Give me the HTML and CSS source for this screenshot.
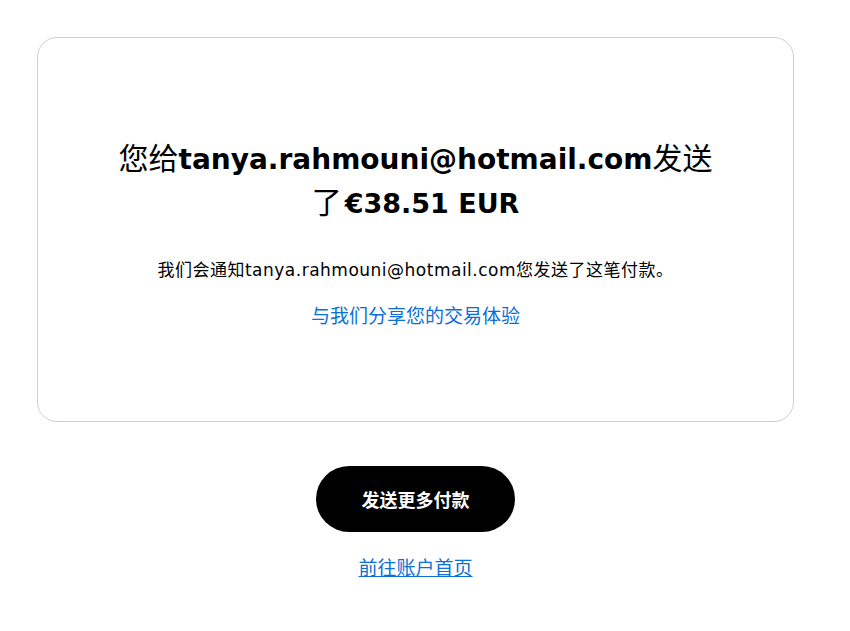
FILE: index.html
```html
<!DOCTYPE html>
<html lang="zh-CN">
<head>
    <meta charset="UTF-8">
    <meta name="viewport" content="width=device-width, initial-scale=1.0">
    <title>付款已发送</title>
    <link rel="stylesheet" href="styles.css">
</head>
<body>
    <div class="page">
        <!-- 付款确认 -->
        <div class="card">
            <h1 class="title"><span>您给</span><b>tanya.rahmouni@hotmail.com</b><span>发送</span><span>了</span><b class="amount">€38.51 EUR</b></h1>
            <p class="note">我们会通知tanya.rahmouni@hotmail.com您发送了这笔付款。</p>
            <a class="feedback" href="#">与我们分享您的交易体验</a>
        </div>

        <div class="actions">
            <a class="btn-primary" href="#">发送更多付款</a>
            <a class="home-link" href="#">前往账户首页</a>
        </div>
    </div>
</body>
</html>
```

FILE: styles.css
```css
body {
    margin: 0;
    padding: 0;
    background-color: #fff;
    color: #000;
    font-family: "DejaVu Sans", "Noto Sans CJK SC", sans-serif;
}
.page {
    padding: 37px 56px 0 37px;
}
.card {
    border: 1px solid #cfcfcf;
    border-radius: 20px;
    padding: 99px 20px 93px;
    display: flex;
    flex-direction: column;
    align-items: center;
    text-align: center;
}
.title {
    margin: 0;
    max-width: 606px;
    font-size: 30px;
    line-height: 44px;
    font-weight: 400;
}
.title b {
    font-size: 28px;
    line-height: 30px;
    font-weight: 700;
}
.title .amount {
    margin-left: 3px;
    font-size: 27px;
}
.note {
    margin: 33px 0 0;
    font-size: 17px;
    line-height: 24px;
    letter-spacing: 0.5px;
}
.feedback {
    margin-top: 22px;
    font-size: 19px;
    line-height: 24px;
    color: #0b6fd6;
    text-decoration: none;
}
.actions {
    display: flex;
    flex-direction: column;
    align-items: center;
    padding-top: 44px;
}
.btn-primary {
    display: flex;
    align-items: center;
    justify-content: center;
    width: 199px;
    height: 66px;
    border-radius: 33px;
    background-color: #000;
    color: #fff;
    font-size: 18px;
    font-weight: 700;
    text-decoration: none;
}
.home-link {
    margin-top: 23px;
    font-size: 19px;
    line-height: 26px;
    color: #0b6fd6;
}
```
